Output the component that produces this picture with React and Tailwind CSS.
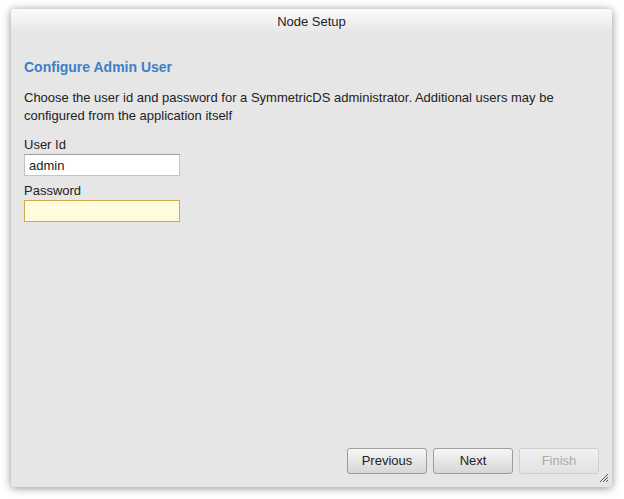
export default function App() {
  return (
    <div className="w-[624px] h-[499px] bg-white pl-[11px] pt-[9px]" style={{ fontFamily: '"Liberation Sans", Arial, sans-serif' }}>
      <div className="relative w-[601px] h-[478px] flex flex-col bg-[#e6e6e6] rounded-[3px] shadow-[0_1px_8px_rgba(0,0,0,0.45)]">
        <div className="h-[25px] shrink-0 flex items-center justify-center rounded-t-[3px] bg-gradient-to-b from-[#fbfbfb] to-[#e6e6e6] text-[13px] text-[#222]">
          Node Setup
        </div>
        <div className="flex-1 px-[13px] pt-[24px] text-[13px] text-[#222]">
          <h2 className="text-[14px] leading-[18px] font-bold text-[#3d7fc5]">Configure Admin User</h2>
          <p className="mt-[13px] leading-[18px]">
            Choose the user id and password for a SymmetricDS administrator. Additional users may be configured from the application itself
          </p>
          <div className="mt-[11px] leading-[18px]">User Id</div>
          <input
            defaultValue="admin"
            className="block w-[156px] h-[22px] px-[4px] bg-white border border-[#c4c4c4] border-t-[#9e9e9e] text-[13px] text-[#222] outline-none"
          />
          <div className="mt-[6px] leading-[18px]">Password</div>
          <input
            type="password"
            className="block w-[156px] h-[22px] px-[4px] bg-[#fffbdd] border border-[#d2a74e] text-[13px] outline-none"
          />
        </div>
        <div className="flex justify-end gap-[6px] pr-[13px] pb-[13px]">
          <button className="w-[80px] h-[26px] rounded-[3px] border border-[#9d9d9d] bg-gradient-to-b from-[#f7f7f7] to-[#d6d6d6] text-[13px] text-[#222]">Previous</button>
          <button className="w-[80px] h-[26px] rounded-[3px] border border-[#9d9d9d] bg-gradient-to-b from-[#f7f7f7] to-[#d6d6d6] text-[13px] text-[#222]">Next</button>
          <button className="w-[80px] h-[26px] rounded-[3px] border border-[#cfcfcf] bg-gradient-to-b from-[#f1f1f1] to-[#e2e2e2] text-[13px] text-[#aaa]">Finish</button>
        </div>
        <svg className="absolute right-[3px] bottom-[4px]" width="10" height="10" viewBox="0 0 10 10">
          <path d="M1 9 L9 1 M4 9 L9 4 M7 9 L9 7" stroke="#555" strokeWidth="1" />
        </svg>
      </div>
    </div>
  )
}
